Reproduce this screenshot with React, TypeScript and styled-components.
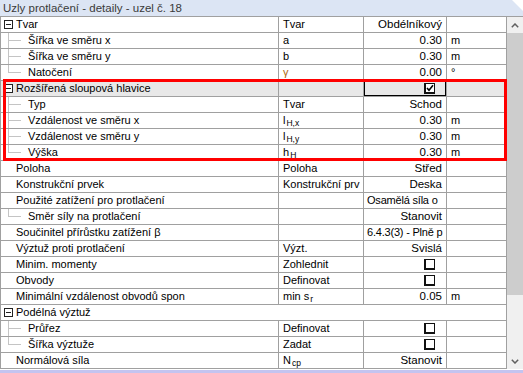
import React from "react"
import styled, { createGlobalStyle } from "styled-components"

const GlobalStyle = createGlobalStyle`
  html, body {
    margin: 0;
    padding: 0;
    background: #fff;
  }
  body {
    font-family: "Liberation Sans", Arial, sans-serif;
    font-size: 11px;
    color: #000;
  }
`

const line = "#a0a0a0"
const tree = "#c4c4c4"

const Panel = styled.div`
  position: relative;
  width: 523px;
  height: 373px;
  overflow: hidden;
  background: #fff;
`

const TitleBar = styled.div`
  height: 16px;
  display: flex;
  align-items: center;
  padding-left: 3px;
  background: #dce5f4;
  color: #3a3a3a;
  font-size: 11.5px;
  clip-path: polygon(0 0, 512px 0, 523px 11px, 523px 16px, 0 16px);
`

const Body = styled.div`
  display: flex;
  border-top: 1px solid ${line};
`

const Grid = styled.div`
  width: 506px;
  border-left: 1px solid ${line};
  border-right: 1px solid ${line};
`

const Row = styled.div<{ $shade?: boolean }>`
  display: grid;
  grid-template-columns: 277px 85px 83px 59px;
  height: 15px;
  border-bottom: 1px solid ${line};
  background: ${(p) => (p.$shade ? "#e8e8e8" : "#fff")};
  line-height: 15px;
  white-space: nowrap;
`

const NameCell = styled.div<{ $pad: number }>`
  display: flex;
  align-items: center;
  padding-left: ${(p) => p.$pad}px;
  overflow: hidden;
`

const Cell = styled.div<{ $align?: "left" | "right"; $focus?: boolean }>`
  border-left: 1px solid ${line};
  padding: ${(p) => (p.$align === "left" ? "0 0 0 3px" : "0 4px")};
  overflow: hidden;
  display: flex;
  align-items: center;
  justify-content: ${(p) => (p.$align === "right" ? "flex-end" : "flex-start")};
  box-shadow: ${(p) => (p.$focus ? "inset 0 0 0 1px #000" : "none")};
`

const ValueText = styled.span<{ $small?: boolean }>`
  font-size: ${(p) => (p.$small ? "11px" : "11.5px")};
  letter-spacing: ${(p) => (p.$small ? "-0.2px" : "0")};
`

const Sub = styled.span`
  font-size: 8.5px;
  margin-left: 1px;
  position: relative;
  top: 2px;
`

const Box = styled.span`
  display: inline-flex;
  align-items: center;
  justify-content: center;
  width: 8px;
  height: 8px;
  margin-right: 7px;
  border: 1px solid #111;
  border-left-width: 2px;
  border-bottom-width: 2px;
  background: #fff;
`

const Scrollbar = styled.div`
  width: 16px;
  display: flex;
  flex-direction: column;
  background: #f0f0f0;
`

const ArrowButton = styled.div`
  height: 16px;
  display: flex;
  align-items: center;
  justify-content: center;
  background: #f0f0f0;
`

const Thumb = styled.div`
  height: 262px;
  background: #cdcdcd;
`

const Track = styled.div`
  flex: 1;
`

const Highlight = styled.div`
  position: absolute;
  left: 3px;
  top: 79px;
  width: 504px;
  height: 82px;
  border: 3px solid #ff0000;
  box-sizing: border-box;
  pointer-events: none;
`

const BottomEdge = styled.div`
  position: absolute;
  left: 0;
  right: 0;
  bottom: 0;
  height: 3px;
  background: #c4c4f0;
`

type Kind = "group" | "child" | "last" | "plain" | "section"

type RowData = {
  kind: Kind
  name: string
  sym?: React.ReactNode
  value?: React.ReactNode
  unit?: string
  align?: "left" | "right"
  shade?: boolean
  focus?: boolean
}

const Expander = () => (
  <svg width="9" height="9" viewBox="0 0 9 9" style={{ marginRight: 3, flexShrink: 0 }}>
    <rect x="0.5" y="0.5" width="8" height="8" fill="#fff" stroke="#222" />
    <line x1="2" y1="4.5" x2="7" y2="4.5" stroke="#222" />
  </svg>
)

const Connector = ({ last }: { last?: boolean }) => (
  <svg width="22" height="15" viewBox="0 0 22 15" style={{ marginRight: 5, flexShrink: 0 }}>
    <line x1="7.5" y1="0" x2="7.5" y2={last ? 8 : 15} stroke={tree} />
    <line x1="7.5" y1="7.5" x2="20" y2="7.5" stroke={tree} />
  </svg>
)

const Check = ({ checked }: { checked?: boolean }) => (
  <Box>
    {checked && (
      <svg width="8" height="8" viewBox="0 0 8 8">
        <path d="M1 4 L3 6.2 L7 1.2" fill="none" stroke="#000" strokeWidth="1.6" />
      </svg>
    )}
  </Box>
)

const sym = (base: string, sub: string) => (
  <span>
    {base}
    <Sub>{sub}</Sub>
  </span>
)

const rows: RowData[] = [
  { kind: "group", name: "Tvar", sym: "Tvar", value: "Obdélníkový" },
  { kind: "child", name: "Šířka ve směru x", sym: "a", value: "0.30", unit: "m" },
  { kind: "child", name: "Šířka ve směru y", sym: "b", value: "0.30", unit: "m" },
  { kind: "last", name: "Natočení", sym: <span style={{ color: "#b06a10" }}>γ</span>, value: "0.00", unit: "°" },
  { kind: "group", name: "Rozšířená sloupová hlavice", value: <Check checked />, shade: true, focus: true },
  { kind: "child", name: "Typ", sym: "Tvar", value: "Schod" },
  { kind: "child", name: "Vzdálenost ve směru x", sym: sym("l", "H,x"), value: "0.30", unit: "m" },
  { kind: "child", name: "Vzdálenost ve směru y", sym: sym("l", "H,y"), value: "0.30", unit: "m" },
  { kind: "last", name: "Výška", sym: sym("h", "H"), value: "0.30", unit: "m" },
  { kind: "plain", name: "Poloha", sym: "Poloha", value: "Střed" },
  { kind: "plain", name: "Konstrukční prvek", sym: "Konstrukční prv", value: "Deska" },
  { kind: "plain", name: "Použité zatížení pro protlačení", value: "Osamělá síla o", align: "left" },
  { kind: "last", name: "Směr síly na protlačení", value: "Stanovit" },
  { kind: "plain", name: "Součinitel přírůstku zatížení β", value: "6.4.3(3) - Plně p", align: "left" },
  { kind: "plain", name: "Výztuž proti protlačení", sym: "Výzt.", value: "Svislá" },
  { kind: "plain", name: "Minim. momenty", sym: "Zohlednit", value: <Check /> },
  { kind: "plain", name: "Obvody", sym: "Definovat", value: <Check /> },
  { kind: "plain", name: "Minimální vzdálenost obvodů spon", sym: sym("min s", "r"), value: "0.05", unit: "m" },
  { kind: "section", name: "Podélná výztuž" },
  { kind: "child", name: "Průřez", sym: "Definovat", value: <Check /> },
  { kind: "last", name: "Šířka výztuže", sym: "Zadat", value: <Check /> },
  { kind: "plain", name: "Normálová síla", sym: sym("N", "cp"), value: "Stanovit" },
]

const Name = ({ row }: { row: RowData }) => {
  if (row.kind === "group" || row.kind === "section")
    return (
      <NameCell $pad={3}>
        <Expander />
        {row.name}
      </NameCell>
    )
  if (row.kind === "child" || row.kind === "last")
    return (
      <NameCell $pad={0}>
        <Connector last={row.kind === "last"} />
        {row.name}
      </NameCell>
    )
  return <NameCell $pad={15}>{row.name}</NameCell>
}

const Chevron = ({ down }: { down?: boolean }) => (
  <svg width="8" height="5" viewBox="0 0 8 5">
    <path
      d={down ? "M0.8 0.8 L4 4 L7.2 0.8" : "M0.8 4.2 L4 1 L7.2 4.2"}
      fill="none"
      stroke="#606060"
      strokeWidth="1.5"
    />
  </svg>
)

export default function App() {
  return (
    <>
      <GlobalStyle />
      <Panel>
        <TitleBar>Uzly protlačení - detaily - uzel č. 18</TitleBar>
        <Body>
          <Grid>
            {rows.map((row, i) =>
              row.kind === "section" ? (
                <Row key={i}>
                  <Name row={row} />
                </Row>
              ) : (
                <Row key={i} $shade={row.shade}>
                  <Name row={row} />
                  <Cell>{row.sym}</Cell>
                  <Cell $align={row.align || "right"} $focus={row.focus}>
                    {typeof row.value === "string" ? (
                      <ValueText $small={row.align === "left"}>{row.value}</ValueText>
                    ) : (
                      row.value
                    )}
                  </Cell>
                  <Cell>{row.unit}</Cell>
                </Row>
              )
            )}
          </Grid>
          <Scrollbar>
            <ArrowButton>
              <Chevron />
            </ArrowButton>
            <Thumb />
            <Track />
            <ArrowButton>
              <Chevron down />
            </ArrowButton>
          </Scrollbar>
        </Body>
        <Highlight />
        <BottomEdge />
      </Panel>
    </>
  )
}
